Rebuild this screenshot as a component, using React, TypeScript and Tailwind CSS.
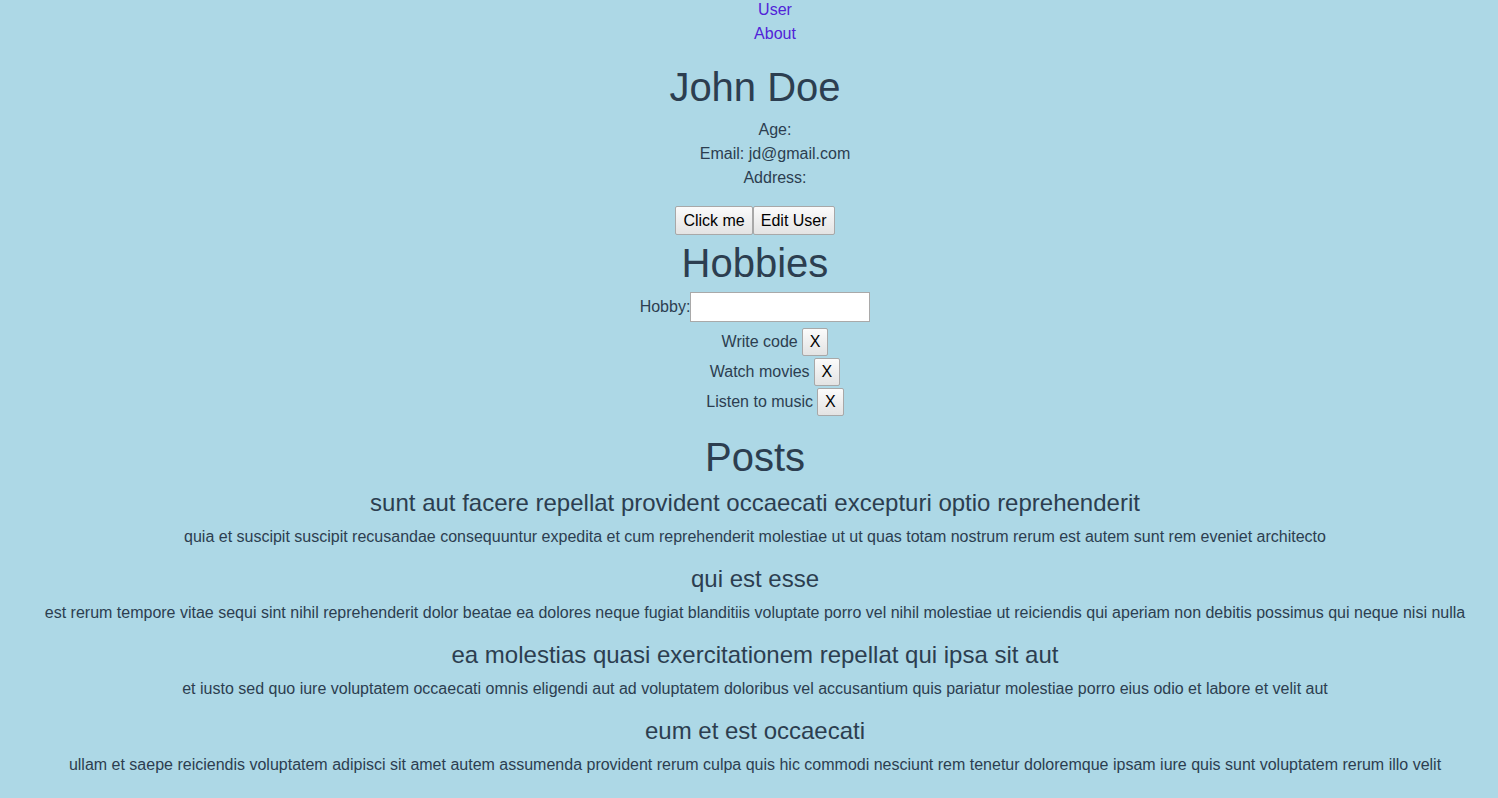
import { useState } from 'react';

const posts = [
	{
		title: 'sunt aut facere repellat provident occaecati excepturi optio reprehenderit',
		body: 'quia et suscipit suscipit recusandae consequuntur expedita et cum reprehenderit molestiae ut ut quas totam nostrum rerum est autem sunt rem eveniet architecto',
	},
	{
		title: 'qui est esse',
		body: 'est rerum tempore vitae sequi sint nihil reprehenderit dolor beatae ea dolores neque fugiat blanditiis voluptate porro vel nihil molestiae ut reiciendis qui aperiam non debitis possimus qui neque nisi nulla',
	},
	{
		title: 'ea molestias quasi exercitationem repellat qui ipsa sit aut',
		body: 'et iusto sed quo iure voluptatem occaecati omnis eligendi aut ad voluptatem doloribus vel accusantium quis pariatur molestiae porro eius odio et labore et velit aut',
	},
	{
		title: 'eum et est occaecati',
		body: 'ullam et saepe reiciendis voluptatem adipisci sit amet autem assumenda provident rerum culpa quis hic commodi nesciunt rem tenetur doloremque ipsam iure quis sunt voluptatem rerum illo velit',
	},
	{
		title: 'nesciunt quas odio',
		body: 'repudiandae veniam quaerat sunt sed alias aut fugiat sit autem sed est voluptatem omnis possimus esse voluptatibus quis est aut tenetur dolor neque',
	},
];

const btn =
	'border border-[#a8a8a8] rounded-[2px] bg-gradient-to-b from-[#fbfbfb] to-[#e3e3e3] text-black text-[16px]';

const App = () => {
	const [hobbies, setHobbies] = useState(['Write code', 'Watch movies', 'Listen to music']);
	const [hobby, setHobby] = useState('');

	return (
		<div className="min-h-screen bg-[#add8e6] pl-[12px] text-center text-[16px] leading-[24px] text-[#2c3e50] font-['Liberation_Sans',Arial,sans-serif]">
			<ul className="-mt-[2px] pl-10">
				<li>
					<a href="#user" className="text-[#5123d8]">User</a>
				</li>
				<li>
					<a href="#about" className="text-[#5123d8]">About</a>
				</li>
			</ul>

			<h1 className="mt-[11px] text-[40px] leading-[60px]">John Doe</h1>
			<ul className="mt-px pl-10">
				<li>Age: </li>
				<li>Email: jd@gmail.com</li>
				<li>Address: </li>
			</ul>

			<div className="mt-[16px] flex justify-center">
				<button className={`${btn} px-[7px] py-[4px] leading-[19px]`}>Click me</button>
				<button className={`${btn} px-[7px] py-[4px] leading-[19px]`}>Edit User</button>
			</div>

			<h2 className="text-[40px] leading-[56px]">Hobbies</h2>
			<div className="mt-px flex items-center justify-center">
				<label htmlFor="hobby">Hobby:</label>
				<input
					id="hobby"
					value={hobby}
					onChange={(e) => setHobby(e.target.value)}
					onKeyDown={(e) => {
						if (e.key === 'Enter' && hobby.trim()) {
							setHobbies([...hobbies, hobby.trim()]);
							setHobby('');
						}
					}}
					className="h-[30px] w-[180px] border border-[#a9a9a9] bg-white px-1 outline-none"
				/>
			</div>
			<ul className="mt-[5px] pl-10">
				{hobbies.map((h, i) => (
					<li key={h} className="flex h-[30px] items-center justify-center gap-[4px]">
						<span>{h}</span>
						<button
							onClick={() => setHobbies(hobbies.filter((_, j) => j !== i))}
							className={`${btn} px-[7px] py-[4px] leading-[18px]`}
						>
							X
						</button>
					</li>
				))}
			</ul>

			<h2 className="mt-[13px] text-[40px] leading-[55px]">Posts</h2>
			{posts.map((p) => (
				<div key={p.title} className="mb-[12px]">
					<h3 className="text-[24px] leading-[36px]">{p.title}</h3>
					<p className="mt-[4px]">{p.body}</p>
				</div>
			))}
		</div>
	);
};

export default App;
